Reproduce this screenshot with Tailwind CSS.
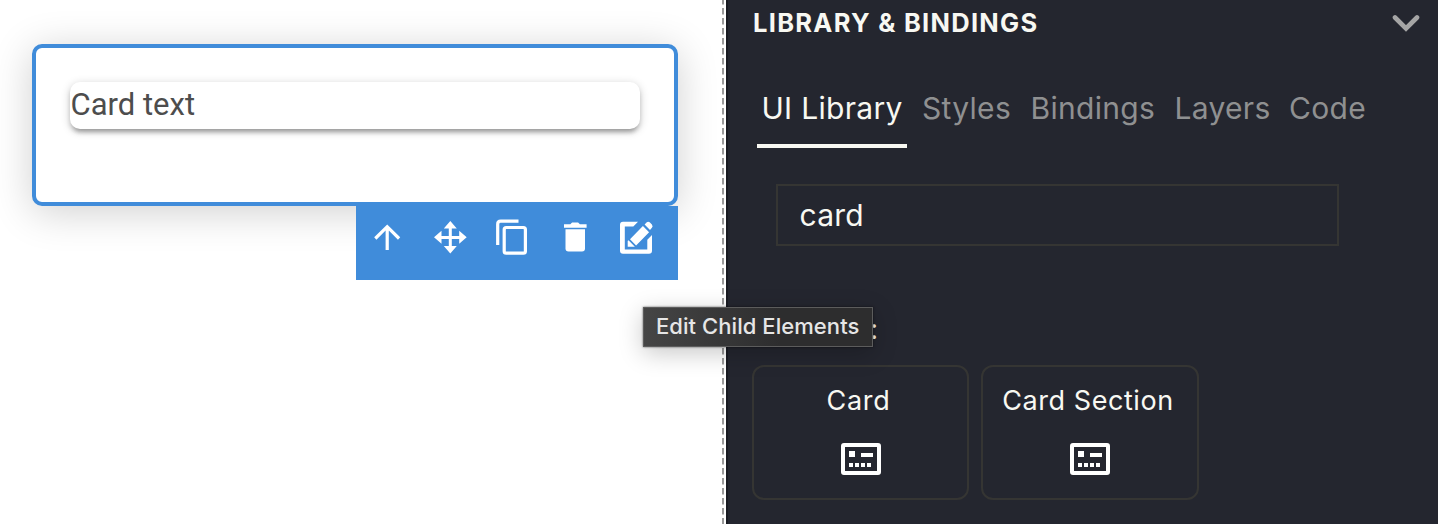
<!DOCTYPE html>
<html lang="en">
<head>
<meta charset="utf-8">
<title>Editor</title>
<script src="https://cdn.jsdelivr.net/npm/@tailwindcss/browser@4"></script>
</head>
<body class="relative flex h-[524px] w-[1438px] overflow-hidden bg-white font-['Inter',sans-serif] text-[#f8f8f2]">
  <main class="flex h-full w-[722px] flex-col items-start pt-[44px] pl-8">
    <section class="h-[162px] w-[646px] rounded-[10px] border-4 border-[#408cda] bg-white px-[34px] pt-[34px] shadow-[0_6px_40px_rgba(0,0,0,0.19)]">
      <div class="flex h-[47px] w-[570px] items-center rounded-[10px] bg-white pb-0.5 pl-[0.5px] shadow-[0_2px_10px_rgba(0,0,0,0.2),0_4px_4px_rgba(0,0,0,0.14),0_6px_4px_-4px_rgba(0,0,0,0.2)]">
        <span class="text-[31px] leading-none whitespace-nowrap text-[#4d4d4d] font-['Roboto',sans-serif]">Card text</span>
      </div>
    </section>
    <nav class="relative ml-[324px] h-[74px] w-[322px] bg-[#408cda]">
      <svg class="block" width="322" height="74" viewBox="356 206 322 74" fill="none" stroke="#fff">
        <path d="M387.200 250V227M375.300 238.500L387.200 226.700L399.100 238.500" stroke-width="3.200"/>
        <path d="M450.300 227V248M439 237.500H462" stroke-width="3"/>
        <path d="M450.300 221l6.500 7.500h-13zM450.300 253.500l-6.500-7.500h13zM434 237.300l7.500-6.500v13zM466.700 237.300l-7.500-6.500v13z" fill="#fff" stroke="none"/>
        <path d="M497.700 245V224.200Q497.700 221.200 500.700 221.200H518.500" stroke-width="3.200"/>
        <rect x="504.200" y="227.500" width="21.200" height="25.700" rx="2" stroke-width="3.200"/>
        <g fill="#fff" stroke="none">
          <path d="M564 224.200h6.300l1.800-1.700h6l1.800 1.700h6.700v3.500H564z"/>
          <path d="M565.500 229.300h19.500v19.200a3 3 0 0 1-3 3h-13.500a3 3 0 0 1-3-3z"/>
          <path d="M638 221.700h-15a3 3 0 0 0-3 3v26a3 3 0 0 0 3 3h26a3 3 0 0 0 3-3V235l-4.700 4.700v9.800h-22.500v-23h8.500z"/>
          <path d="M630 239.200l12.900-13.100 6.200 6.200-13 13.100zM628.500 240.300l6.400 6.400h-7.200v-5.600zM644.600 224.400l1.900-1.900a2.800 2.800 0 0 1 3.200-.3l2.200 2.200a2.800 2.800 0 0 1-.2 3.700l-1.700 1.800z"/>
        </g>
      </svg>
    </nav>
  </main>
  <div class="h-full w-1 bg-white">
    <svg class="block" width="4" height="524"><path d="M1 -2V524" stroke="#9b9b9b" stroke-width="2" stroke-dasharray="6.5 3.5"/></svg>
  </div>
  <aside class="flex h-full w-[712px] flex-col border-l-2 border-[#191b22] bg-[#24262f]">
    <header class="flex h-[46px] items-center justify-between pr-[18px] pl-[25px]">
      <h2 class="text-[25.5px] leading-none font-bold tracking-[1.28px] whitespace-nowrap">LIBRARY &amp; BINDINGS</h2>
      <svg width="28" height="18" viewBox="0 0 28 18" fill="none"><path d="M3 3.500L14 14.500L25 3.500" stroke="#a5a5a5" stroke-width="4.600" stroke-linecap="round"/></svg>
    </header>
    <div class="mt-[42px] ml-[29px] flex h-[60px] text-[30px] leading-[40px] tracking-[0.3px] whitespace-nowrap text-[#8f9091]">
      <span class="w-[150px] border-b-4 border-[#f8f8f2] pl-[4.5px] text-[#f8f8f2]">UI Library</span>
      <span class="w-[109px] pl-[15px]">Styles</span>
      <span class="w-[144px] pl-[14.5px]">Bindings</span>
      <span class="w-[115px] pl-[14.5px]">Layers</span>
      <span class="pl-[14px]">Code</span>
    </div>
    <div class="mt-[36px] ml-[48px] flex h-[62px] w-[563px] items-center border-2 border-[#353533] pl-[21.5px] text-[30px] leading-none tracking-[0.2px]">card</div>
    <div class="mt-[67px] ml-[142px] h-[32px] text-[28px] leading-[32px]">:</div>
    <div class="mt-[20px] ml-[24px] flex gap-3">
      <div class="flex h-[135px] w-[217px] flex-col items-center rounded-[12px] border-2 border-[#353533] pt-[18px]">
        <span class="-ml-[4px] text-[27px] leading-[32px] tracking-[0.7px]">Card</span>
        <svg class="mt-[26px]" width="40" height="32" fill="#fff"><path fill-rule="evenodd" d="M3 0h34a3 3 0 0 1 3 3v26a3 3 0 0 1-3 3H3a3 3 0 0 1-3-3V3a3 3 0 0 1 3-3zM4 4v24h32V4zM8 8h6v6H8zM20 10h12v4H20zM8 20h4v4H8zM14 20h4v4h-4zM20 20h4v4h-4zM26 20h4v4h-4z"/></svg>
      </div>
      <div class="flex h-[135px] w-[218px] flex-col items-center rounded-[12px] border-2 border-[#353533] pt-[18px]">
        <span class="-ml-[4px] text-[27px] leading-[32px] tracking-[0.55px] whitespace-nowrap">Card Section</span>
        <svg class="mt-[26px]" width="40" height="32" fill="#fff"><path fill-rule="evenodd" d="M3 0h34a3 3 0 0 1 3 3v26a3 3 0 0 1-3 3H3a3 3 0 0 1-3-3V3a3 3 0 0 1 3-3zM4 4v24h32V4zM8 8h6v6H8zM20 10h12v4H20zM8 20h4v4H8zM14 20h4v4h-4zM20 20h4v4h-4zM26 20h4v4h-4z"/></svg>
      </div>
    </div>
  </aside>
  <div class="absolute top-[307px] left-[643px] flex h-[40px] w-[230px] items-center border border-[#5c5c5c] bg-linear-to-r from-[#454545] to-[#2d2d2e] to-60% pb-0.5 pl-3 text-[22px] leading-none font-medium tracking-[0.06px] whitespace-nowrap text-[#e6e6e6] shadow-[0_6px_24px_rgba(0,0,0,0.22),0_0_2px_rgba(0,0,0,0.6)]">Edit Child Elements</div>
</body>
</html>
